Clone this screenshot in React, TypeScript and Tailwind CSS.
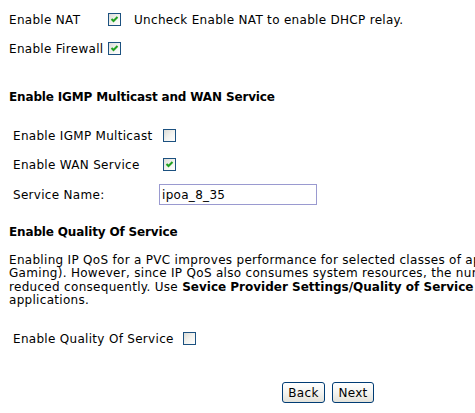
import React from 'react';

const Check: React.FC<{ checked?: boolean; className?: string }> = ({ checked, className }) => (
  <span
    className={
      'inline-flex w-[13px] h-[13px] shrink-0 items-center justify-center border border-[#1c5180] bg-linear-to-br from-[#dcdcd7] via-[#f2f2ee] to-white ' +
      (className || '')
    }
  >
    {checked && (
      <svg width="11" height="11" viewBox="0 0 11 11">
        <path d="M2.5 5 L4.5 7 L8.5 3" fill="none" stroke="#21a121" strokeWidth="2" />
      </svg>
    )}
  </span>
);

const XpButton: React.FC<{ label: string; className?: string }> = ({ label, className }) => (
  <button
    className={
      'h-[21px] rounded-[3px] border border-[#003c74] bg-linear-to-b from-white via-[#f4f4f0] to-[#e3e2da] text-[12px] leading-none tracking-[0.3px] text-black ' +
      (className || '')
    }
  >
    {label}
  </button>
);

export default function App() {
  return (
    <div className="w-[475px] h-[413px] overflow-hidden bg-white text-black text-[12px] tracking-[0.3px] font-['DejaVu_Sans',Verdana,sans-serif]">
      <div className="w-[700px] pt-[5px]">
        {/* NAT / firewall */}
        <div className="flex h-[29px] items-center pl-[9px]">
          <span className="w-[99px]">Enable NAT</span>
          <Check checked />
          <span className="ml-[13px]">Uncheck Enable NAT to enable DHCP relay.</span>
        </div>
        <div className="flex h-[29px] items-center pl-[9px]">
          <span className="w-[99px]">Enable Firewall</span>
          <Check checked />
        </div>

        {/* IGMP / WAN */}
        <h3 className="mt-[27px] h-[15px] pl-[9px] font-bold leading-[15px] tracking-[-0.15px]">
          Enable IGMP Multicast and WAN Service
        </h3>
        <div className="mt-[16px] pl-[13px]">
          <div className="flex h-[29px] items-center">
            <span className="w-[150px]">Enable IGMP Multicast</span>
            <Check />
          </div>
          <div className="flex h-[29px] items-center">
            <span className="w-[150px]">Enable WAN Service</span>
            <Check checked />
          </div>
          <div className="flex h-[31px] items-center">
            <span className="w-[146px]">Service Name:</span>
            <input
              defaultValue="ipoa_8_35"
              className="h-[21px] w-[158px] border border-[#9a9ad0] px-[2px] text-[12px] tracking-[0.3px] outline-none"
            />
          </div>
        </div>

        {/* QoS */}
        <h3 className="mt-[15px] h-[15px] pl-[9px] font-bold leading-[15px] tracking-[-0.15px]">Enable Quality Of Service</h3>
        <p className="mt-[14px] pl-[9px] leading-[13.33px] whitespace-nowrap">
          Enabling IP QoS for a PVC improves performance for selected classes of applications (such as VoIP, Video, Interactive
          <br />
          Gaming). However, since IP QoS also consumes system resources, the number of PVCs will be
          <br />
          reduced consequently. Use <b className="tracking-normal">Sevice Provider Settings/Quality of Service</b> to assign priorities for the
          <br />
          applications.
        </p>
        <div className="mt-[17px] flex h-[29px] items-center pl-[13px]">
          <span className="w-[170px]">Enable Quality Of Service</span>
          <Check />
        </div>

        <div className="mt-[29px] flex gap-[7px] pl-[282px]">
          <XpButton label="Back" className="w-[43px]" />
          <XpButton label="Next" className="w-[42px]" />
        </div>
      </div>
    </div>
  );
}
